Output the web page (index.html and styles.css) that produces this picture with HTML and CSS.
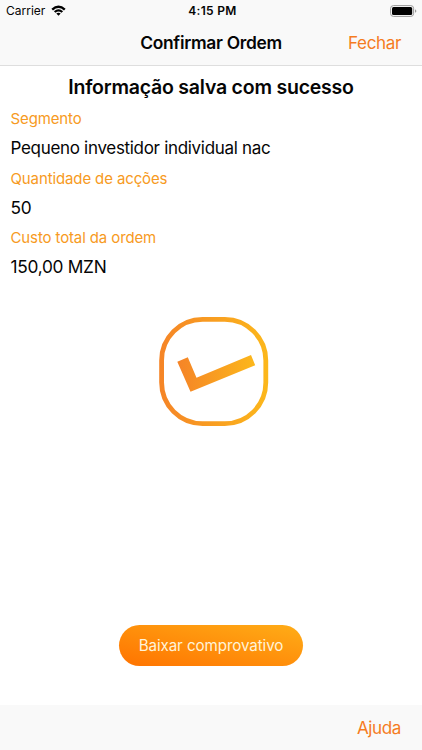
FILE: index.html
```
<!DOCTYPE html>
<html lang="pt">
<head>
<meta charset="utf-8">
<title>Confirmar Ordem</title>
<link rel="stylesheet" href="styles.css">
</head>
<body>
<div class="screen">
  <header class="top">
    <div class="status">
      <div class="carrier"><span>Carrier</span>
        <svg class="wifi" viewBox="0 0 15 11" width="15" height="11">
          <path d="M0.4 3.8Q7.5-2.8 14.6 3.8L13 5.4Q7.5 .5 2 5.4ZM2.9 6.2Q7.5 2.2 12.1 6.2L10.5 7.8Q7.5 5.3 4.5 7.8ZM5.3 8.5Q7.5 6.8 9.7 8.5L7.5 10.7Z"/>
        </svg>
      </div>
      <span class="time">4:15 PM</span>
      <svg class="battery" viewBox="0 0 27 12" width="27" height="12">
        <rect x=".6" y=".6" width="23" height="10.8" rx="2.8" fill="none" stroke="#999"/>
        <rect x="2" y="2" width="20.2" height="8" rx="1.5"/>
        <path d="M25 4.2Q27.8 6 25 7.8Z" fill="#999"/>
      </svg>
    </div>
    <nav class="navbar">
      <h1 class="title">Confirmar Ordem</h1>
      <a class="action close">Fechar</a>
    </nav>
  </header>
  <main class="content">
    <h2 class="heading">Informação salva com sucesso</h2>
    <dl class="details">
      <dt>Segmento</dt><dd class="investor">Pequeno investidor individual nac</dd>
      <dt>Quantidade de acções</dt><dd>50</dd>
      <dt>Custo total da ordem</dt><dd>150,00 MZN</dd>
    </dl>
    <svg class="check" viewBox="0 0 110 110" width="110" height="110">
      <defs>
        <linearGradient id="ring" gradientUnits="userSpaceOnUse" x1="0" y1="0" x2="110" y2="0"><stop stop-color="#f58427"/><stop offset="1" stop-color="#fcb81b"/></linearGradient>
        <linearGradient id="tick" gradientUnits="userSpaceOnUse" x1="19" y1="0" x2="97" y2="0"><stop stop-color="#f58427"/><stop offset="1" stop-color="#fcb81b"/></linearGradient>
      </defs>
      <rect x="2.6" y="2.4" width="104.2" height="104.2" rx="41" fill="none" stroke="url(#ring)" stroke-width="4.8"/>
      <path d="M18.3 44.7L28.8 40.3L37.5 60.8L92 38L96.2 48.2L31.5 74.7Z" fill="url(#tick)"/>
    </svg>
    <button class="download">Baixar comprovativo</button>
  </main>
  <footer class="bottom"><a class="action help">Ajuda</a></footer>
</div>
</body>
</html>
```
FILE: styles.css
```
* { box-sizing: border-box; }
body { margin: 0; font-family: Inter, "Liberation Sans", sans-serif; color: #050505; background: #fff; }
.screen { width: 422px; height: 750px; display: flex; flex-direction: column; white-space: nowrap; }
.top { height: 66px; background: #f9f9f9; border-bottom: 1px solid #dedede; }
.status { height: 22px; padding: 0 5px 0 6px; display: grid; grid-template-columns: 1fr auto 1fr; align-items: center; }
.carrier { display: flex; align-items: center; gap: 6px; margin-top: -1px; font-size: 12px; letter-spacing: 0; }
.time { margin-top: -1px; font-size: 12px; font-weight: 600; letter-spacing: .3px; padding-left: 2px; }
.battery { justify-self: end; margin-top: -1px; }
.navbar { height: 43px; padding: 0 21px; display: grid; grid-template-columns: 1fr auto 1fr; align-items: center; }
.title { grid-column: 2; margin: -2px 0 0; font-size: 17.4px; font-weight: 600; letter-spacing: -.3px; }
.action { color: #f57c1f; font-size: 17.1px; letter-spacing: -.4px; }
.close { justify-self: end; margin-top: -2px; }
.content { flex: 1; display: flex; flex-direction: column; align-items: center; }
.heading { margin: 8px 0 0; font-size: 19.5px; line-height: 26px; font-weight: 600; letter-spacing: -.22px; }
.details { align-self: stretch; margin: 4px 0 0; padding: 0 10.5px; }
dt { height: 30px; line-height: 30px; font-size: 15px; letter-spacing: -.12px; color: #f79a22; }
dd { margin: 0; height: 29.5px; line-height: 28.4px; font-size: 17.3px; letter-spacing: -.28px; }
.investor { font-size: 17px; letter-spacing: -.31px; }
.check { margin: 34px 0 0 5px; }
.download { margin-top: 198px; width: 184px; height: 41px; padding: 0; border: 0; border-radius: 21px; background: linear-gradient(to top right, #ff7300, #ffad17); color: #fff3d8; font: 15.2px Inter, sans-serif; letter-spacing: -.1px; }
.bottom { height: 45px; padding: 0 21px; background: #f9f9f9; display: flex; justify-content: flex-end; align-items: center; }
```
